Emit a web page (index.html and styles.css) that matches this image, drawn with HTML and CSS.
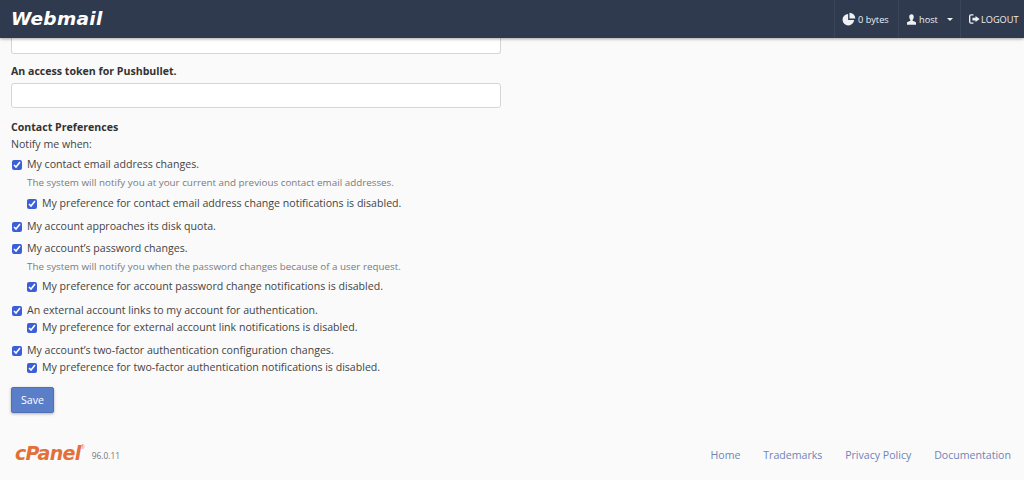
FILE: index.html
```html
<!DOCTYPE html>
<html lang="en">
<head>
<meta charset="utf-8">
<title>Webmail</title>
<link rel="stylesheet" href="styles.css">
</head>
<body>
<header class="topbar">
  <div class="brand">Webmail</div>
  <nav class="topnav">
    <div class="navitem usage">
      <svg class="ico" viewBox="0 0 16 16"><path d="M7 2.200A6.600 6.600 0 1 0 13.800 9H7z"/><path d="M8.600 .8A6.600 6.600 0 0 1 15.200 7.400H8.600z"/></svg>
      <span>0 bytes</span>
    </div>
    <div class="navitem user">
      <svg class="ico ico-user" viewBox="0 0 12 14"><path d="M6 0C3.900 0 3 1.500 3 3.400 3 5 3.700 6.600 4.500 7.400v1.200L.6 10.400C.2 10.600 0 11 0 11.400V14h12v-2.600c0-.4-.2-.8-.6-1L7.500 8.600V7.400C8.300 6.600 9 5 9 3.400 9 1.500 8.100 0 6 0z"/></svg>
      <span>host</span>
      <span class="caret"></span>
    </div>
    <div class="navitem logout">
      <svg class="ico ico-out" viewBox="0 0 16 14"><path d="M6.500 1H3a2 2 0 0 0-2 2v8a2 2 0 0 0 2 2h3.500" fill="none" stroke="currentColor" stroke-width="2"/><path d="M9.500 2.500 15.500 7l-6 4.500V9H5V5h4.500z"/></svg>
      <span>LOGOUT</span>
    </div>
  </nav>
</header>

<main class="content">
  <form class="form">
    <input class="field field-cut" type="text">
    <label class="field-label">An access token for Pushbullet.</label>
    <input class="field" type="text">

    <h2 class="section-title">Contact Preferences</h2>
    <p class="lead">Notify me when:</p>

    <label class="check c1"><input type="checkbox" checked>My contact email address changes.</label>
    <p class="help">The system will notify you at your current and previous contact email addresses.</p>
    <label class="check sub s3"><input type="checkbox" checked>My preference for contact email address change notifications is disabled.</label>

    <label class="check c4"><input type="checkbox" checked>My account approaches its disk quota.</label>

    <label class="check c3"><input type="checkbox" checked>My account’s password changes.</label>
    <p class="help">The system will notify you when the password changes because of a user request.</p>
    <label class="check sub s1"><input type="checkbox" checked>My preference for account password change notifications is disabled.</label>

    <label class="check c2"><input type="checkbox" checked>An external account links to my account for authentication.</label>
    <label class="check sub s2"><input type="checkbox" checked>My preference for external account link notifications is disabled.</label>

    <label class="check c4"><input type="checkbox" checked>My account’s two-factor authentication configuration changes.</label>
    <label class="check sub s2"><input type="checkbox" checked>My preference for two-factor authentication notifications is disabled.</label>

    <button class="save" type="button">Save</button>
  </form>
</main>

<footer class="footer">
  <div class="footer-brand">
    <span class="cpanel">cPanel</span><sup class="reg">®</sup>
    <span class="version">96.0.11</span>
  </div>
  <nav class="footer-links">
    <a href="#">Home</a>
    <a href="#">Trademarks</a>
    <a href="#">Privacy Policy</a>
    <a href="#">Documentation</a>
  </nav>
</footer>
</body>
</html>
```
FILE: styles.css
```css
* { box-sizing: border-box; }
html, body { margin: 0; height: 480px; overflow: hidden; }
body {
  background: #fafafa;
  color: #444;
  font-family: "Open Sans", "Liberation Sans", sans-serif;
  font-size: 10.6px;
  line-height: 17px;
}

.topbar {
  height: 38px;
  background: #2f3a4e;
  box-shadow: 0 1px 3px rgba(0,0,0,.35);
  display: flex;
  justify-content: space-between;
  position: relative;
  z-index: 2;
  color: #fff;
}
.brand {
  font-family: "DejaVu Sans", sans-serif;
  font-weight: 700;
  font-style: italic;
  font-size: 18.5px;
  line-height: 38px;
  padding-left: 11px;
  letter-spacing: .3px;
}
.topnav { display: flex; }
.navitem {
  display: flex;
  align-items: center;
  gap: 2px;
  font-size: 9.2px;
  border-left: 1px solid #3a4558;
  color: #eef0f3;
}
.usage { width: 64px; padding-left: 7px; }
.user { width: 62px; padding-left: 7px; gap: 3px; }
.logout { width: 64px; padding-left: 8px; gap: 1px; }
.ico { width: 14px; height: 14px; fill: currentColor; }
.ico-user { width: 9px; height: 11px; margin-left: 1px; }
.ico-out { width: 11px; height: 10px; }
.caret {
  margin-left: 6px;
  border: 3px solid transparent;
  border-top-color: #eef0f3;
  border-bottom: 0;
}

.content { padding: 0 11px; }
.form { width: 490px; display: flex; flex-direction: column; align-items: flex-start; }
.field {
  display: block;
  width: 490px;
  height: 25px;
  background: #fff;
  border: 1px solid #d6d6d6;
  border-radius: 3px;
  margin: 0;
}
.field-cut { height: 16px; border-top: 0; border-radius: 0 0 3px 3px; }
.field-label { font-weight: 700; margin: 9px 0 3px; color: #333; }
.section-title { font-size: 10.6px; line-height: 17px; font-weight: 700; margin: 11px 0 0; color: #333; }
.lead { margin: 0; }

.check { display: flex; align-items: center; line-height: 17px; margin-top: 3px; }
.check input {
  appearance: auto;
  accent-color: #3b5fd6;
  width: 10px;
  height: 10px;
  margin: 0 5px 0 1px;
}
.sub { margin-left: 15px; margin-top: 3px; }
.c1 { margin-top: 3px; }
.c2 { margin-top: 7px; }
.c3 { margin-top: 5px; }
.c4 { margin-top: 6px; }
.s2 { margin-top: 0; }
.s3 { margin-top: 4px; }
.help { margin: 1px 0 0 16px; font-size: 9.84px; line-height: 17px; color: #7a7a7a; }

.save {
  margin-top: 11px;
  width: 43px;
  height: 26px;
  padding: 0;
  background: #5b7ec9;
  color: #fff;
  border: 1px solid #4f70b8;
  border-radius: 2px;
  font: 10.6px "Open Sans", sans-serif;
  box-shadow: 0 1px 3px rgba(0,0,0,.3);
}

.footer {
  margin-top: 29px;
  padding: 0 13px 0 15px;
  display: flex;
  justify-content: space-between;
  align-items: center;
}
.footer-brand { display: flex; align-items: flex-end; margin-bottom: 4px; }
.cpanel {
  font-family: "DejaVu Sans", sans-serif;
  font-weight: 700;
  font-style: italic;
  font-size: 19px;
  line-height: 22px;
  letter-spacing: -.7px;
  color: #e2703a;
}
.reg { font-size: 5px; line-height: 10px; color: #e2703a; align-self: flex-start; }
.version { font-size: 8.4px; color: #777; line-height: 17px; margin-left: 7px; }
.footer-links { display: flex; gap: 22.8px; }
.footer-links a { color: #6f84b8; text-decoration: none; font-size: 10.6px; }
```
